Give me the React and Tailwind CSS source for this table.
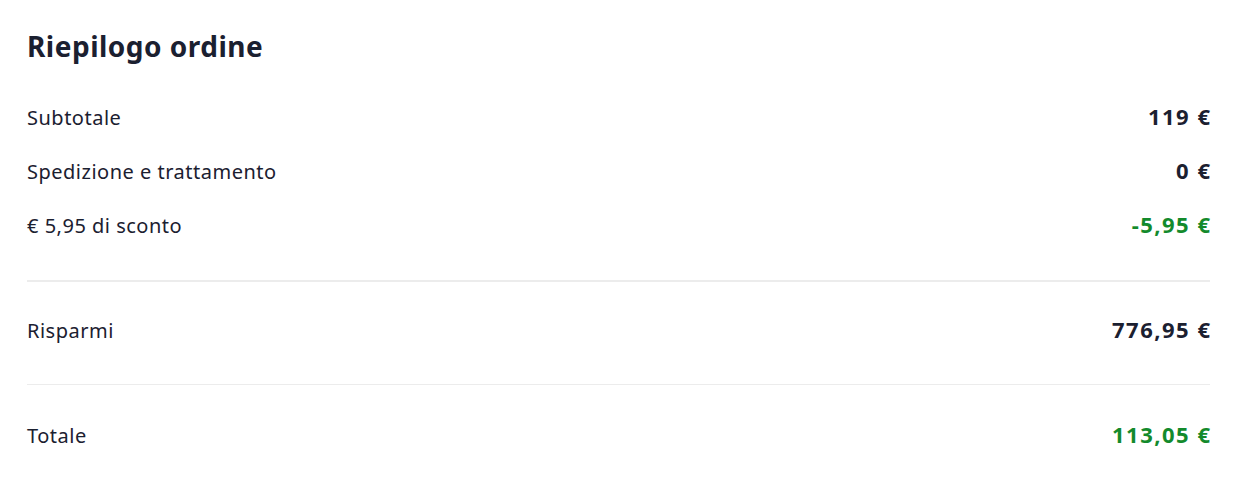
import React from 'react';

const rows = [
  { label: 'Subtotale', value: '119 €' },
  { label: 'Spedizione e trattamento', value: '0 €' },
  { label: '€ 5,95 di sconto', value: '-5,95 €', green: true },
];

function Row({ label, value, green }) {
  return (
    <div className="flex items-baseline justify-between h-[54px] pt-[11px]">
      <span className="text-[20px] leading-[28px] tracking-[0.5px] text-[#1b2030]">{label}</span>
      <span className={`text-[22px] leading-[28px] font-bold tracking-[1.5px] -mr-[1.5px] ${green ? 'text-[#138a2c]' : 'text-[#1b2030]'}`}>
        {value}
      </span>
    </div>
  );
}

export default function App() {
  return (
    <div
      className="bg-white w-[1234px] h-[477px] pl-[27px] pr-[24px] pt-[28px]"
      style={{ fontFamily: '"Noto Sans", sans-serif' }}
    >
      <h2 className="text-[28px] leading-[36px] font-bold tracking-[0.5px] text-[#1b2030]">Riepilogo ordine</h2>

      <div className="mt-[27px] pb-[27px] border-b-2 border-[#ececec]">
        {rows.map((r) => (
          <Row key={r.label} {...r} />
        ))}
      </div>

      <div className="pt-[22px] pb-[26px] border-b border-[#ececec]">
        <Row label="Risparmi" value="776,95 €" />
      </div>

      <div className="pt-[24px]">
        <Row label="Totale" value="113,05 €" green />
      </div>
    </div>
  );
}
